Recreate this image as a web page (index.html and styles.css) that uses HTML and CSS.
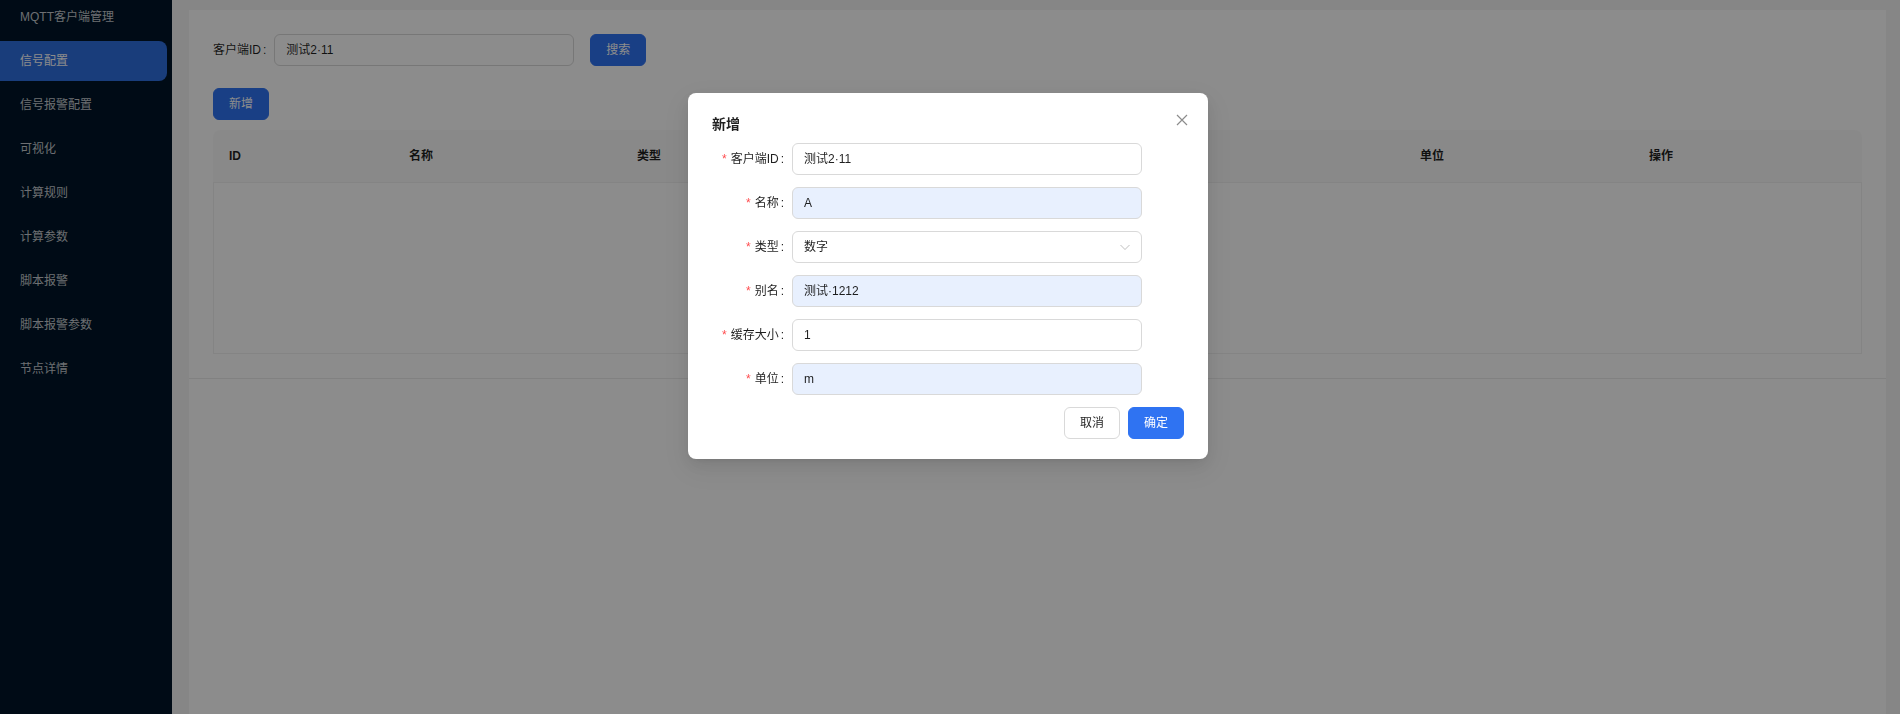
FILE: index.html
```html
<!DOCTYPE html>
<html lang="zh-CN">
<head>
<meta charset="utf-8">
<title>信号配置</title>
<link rel="stylesheet" href="styles.css">
</head>
<body>
<div class="app">
  <aside class="sider">
    <ul class="menu">
      <li class="menu-item">MQTT客户端管理</li>
      <li class="menu-item active">信号配置</li>
      <li class="menu-item">信号报警配置</li>
      <li class="menu-item">可视化</li>
      <li class="menu-item">计算规则</li>
      <li class="menu-item">计算参数</li>
      <li class="menu-item">脚本报警</li>
      <li class="menu-item">脚本报警参数</li>
      <li class="menu-item">节点详情</li>
    </ul>
  </aside>
  <main class="content">
    <div class="panel">
      <section class="card">
        <div class="search">
          <label class="search-label">客户端ID<span class="colon">:</span></label>
          <div class="input search-input">测试2·11</div>
          <button class="btn btn-primary" type="button">搜索</button>
        </div>
        <div class="toolbar">
          <button class="btn btn-primary" type="button">新增</button>
        </div>
        <div class="table">
          <div class="thead">
            <div class="th">ID</div>
            <div class="th">名称</div>
            <div class="th">类型</div>
            <div class="th">别名</div>
            <div class="th">缓存大小</div>
            <div class="th">单位</div>
            <div class="th">操作</div>
          </div>
          <div class="tbody"></div>
        </div>
      </section>
    </div>
  </main>
</div>

<div class="mask"></div>

<div class="modal" role="dialog">
  <div class="modal-header">
    <div class="modal-title">新增</div>
    <button class="modal-close" type="button" aria-label="关闭">
      <svg width="12" height="12" viewBox="0 0 12 12"><path d="M1 1 L11 11 M11 1 L1 11" stroke="currentColor" stroke-width="1.2" fill="none"/></svg>
    </button>
  </div>
  <div class="form">
    <div class="form-item">
      <label class="form-label"><span class="req">*</span>客户端ID<span class="colon">:</span></label>
      <div class="input">测试2·11</div>
    </div>
    <div class="form-item">
      <label class="form-label"><span class="req">*</span>名称<span class="colon">:</span></label>
      <div class="input autofill">A</div>
    </div>
    <div class="form-item">
      <label class="form-label"><span class="req">*</span>类型<span class="colon">:</span></label>
      <div class="input select">
        <span>数字</span>
        <svg class="select-arrow" width="12" height="12" viewBox="0 0 12 12"><path d="M1.5 4 L6 8.5 L10.5 4" stroke="currentColor" stroke-width="1" fill="none"/></svg>
      </div>
    </div>
    <div class="form-item">
      <label class="form-label"><span class="req">*</span>别名<span class="colon">:</span></label>
      <div class="input autofill">测试·1212</div>
    </div>
    <div class="form-item">
      <label class="form-label"><span class="req">*</span>缓存大小<span class="colon">:</span></label>
      <div class="input">1</div>
    </div>
    <div class="form-item">
      <label class="form-label"><span class="req">*</span>单位<span class="colon">:</span></label>
      <div class="input autofill">m</div>
    </div>
  </div>
  <div class="modal-footer">
    <button class="btn btn-default" type="button">取消</button>
    <button class="btn btn-primary btn-ok" type="button">确定</button>
  </div>
</div>
</body>
</html>
```

FILE: styles.css
```css
* { box-sizing: border-box; }

html, body {
  margin: 0;
  padding: 0;
  height: 100%;
}

body {
  font-family: "Liberation Sans", "Noto Sans CJK SC", sans-serif;
  font-size: 12px;
  line-height: 20px;
  color: rgba(0, 0, 0, 0.88);
  background: #f5f5f5;
  overflow: hidden;
}

.app {
  display: flex;
  height: 714px;
}

/* ---------- sidebar ---------- */
.sider {
  width: 172px;
  flex: none;
  background: #001529;
  overflow: hidden;
}

.menu {
  list-style: none;
  margin: -3px 0 0 0;
  padding: 0;
  display: flex;
  flex-direction: column;
  gap: 4px;
}

.menu-item {
  width: 167px;
  height: 40px;
  line-height: 40px;
  padding-left: 20px;
  color: rgba(255, 255, 255, 0.78);
  font-size: 12px;
  border-radius: 0 8px 8px 0;
}

.menu-item.active {
  background: #2f6fe0;
  color: #fff;
}

/* ---------- content ---------- */
.content {
  flex: 1;
  display: flex;
  padding: 10px 14px 0 17px;
  min-width: 0;
}

.panel {
  flex: 1;
  background: #fff;
  display: flex;
  flex-direction: column;
}

.card {
  padding: 24px;
  border-bottom: 1px solid #ececec;
}

.search {
  display: flex;
  align-items: center;
  height: 32px;
}

.search-label {
  color: rgba(0, 0, 0, 0.88);
  white-space: nowrap;
}

.colon {
  margin: 0 8px 0 2px;
}

.input {
  height: 32px;
  border: 1px solid #d9d9d9;
  border-radius: 6px;
  background: #fff;
  padding: 0 11px;
  line-height: 30px;
  font-size: 12px;
  color: rgba(0, 0, 0, 0.88);
  white-space: nowrap;
}

.search-input {
  width: 300px;
  margin-right: 16px;
}

.btn {
  height: 32px;
  padding: 0 15px;
  border-radius: 6px;
  border: 1px solid transparent;
  font-family: inherit;
  font-size: 12px;
  line-height: 30px;
  cursor: pointer;
  white-space: nowrap;
}

.btn-primary {
  background: #2f73f2;
  border-color: #2f73f2;
  color: #fff;
}

.btn-default {
  background: #fff;
  border-color: #d9d9d9;
  color: rgba(0, 0, 0, 0.88);
}

.toolbar {
  margin-top: 22px;
  margin-bottom: 10px;
  display: flex;
}

/* ---------- table ---------- */
.table {
  display: flex;
  flex-direction: column;
}

.thead {
  display: grid;
  grid-template-columns: 180px 228px 228px 277px 278px 229px 228px;
  background: #fafafa;
  border-radius: 8px 8px 0 0;
  border-bottom: 1px solid #f0f0f0;
}

.th {
  padding: 16px;
  font-weight: 600;
  line-height: 20px;
  color: rgba(0, 0, 0, 0.88);
}

.tbody {
  height: 171px;
  border: 1px solid #f0f0f0;
  border-top: none;
}

/* ---------- mask & modal ---------- */
.mask {
  position: fixed;
  inset: 0;
  background: rgba(0, 0, 0, 0.45);
}

.modal {
  position: fixed;
  top: 93px;
  left: 688px;
  width: 520px;
  background: #fff;
  border-radius: 8px;
  padding: 20px 24px;
  box-shadow: 0 6px 16px 0 rgba(0, 0, 0, 0.08), 0 3px 6px -4px rgba(0, 0, 0, 0.12), 0 9px 28px 8px rgba(0, 0, 0, 0.05);
}

.modal-header {
  display: flex;
  justify-content: space-between;
  align-items: flex-start;
  margin-bottom: 8px;
}

.modal-title {
  font-size: 14px;
  font-weight: 600;
  line-height: 22px;
  color: rgba(0, 0, 0, 0.88);
}

.modal-close {
  width: 22px;
  height: 22px;
  margin: -4px -9px 0 0;
  border: none;
  background: transparent;
  color: rgba(0, 0, 0, 0.45);
  display: flex;
  align-items: center;
  justify-content: center;
  padding: 0;
  cursor: pointer;
}

.form {
  display: flex;
  flex-direction: column;
  gap: 12px;
}

.form-item {
  display: flex;
  align-items: center;
}

.form-label {
  width: 80px;
  flex: none;
  text-align: right;
  white-space: nowrap;
  color: rgba(0, 0, 0, 0.88);
}

.form-label .colon {
  margin: 0 8px 0 2px;
}

.req {
  color: #ff4d4f;
  margin-right: 4px;
  font-family: "Liberation Sans", sans-serif;
}

.form-item .input {
  width: 350px;
}

.input.autofill {
  background: #e8f0fe;
}

.input.select {
  display: flex;
  justify-content: space-between;
  align-items: center;
}

.select-arrow {
  color: rgba(0, 0, 0, 0.25);
  margin-right: -1px;
}

.modal-footer {
  display: flex;
  justify-content: flex-end;
  gap: 8px;
  margin-top: 12px;
}
```
